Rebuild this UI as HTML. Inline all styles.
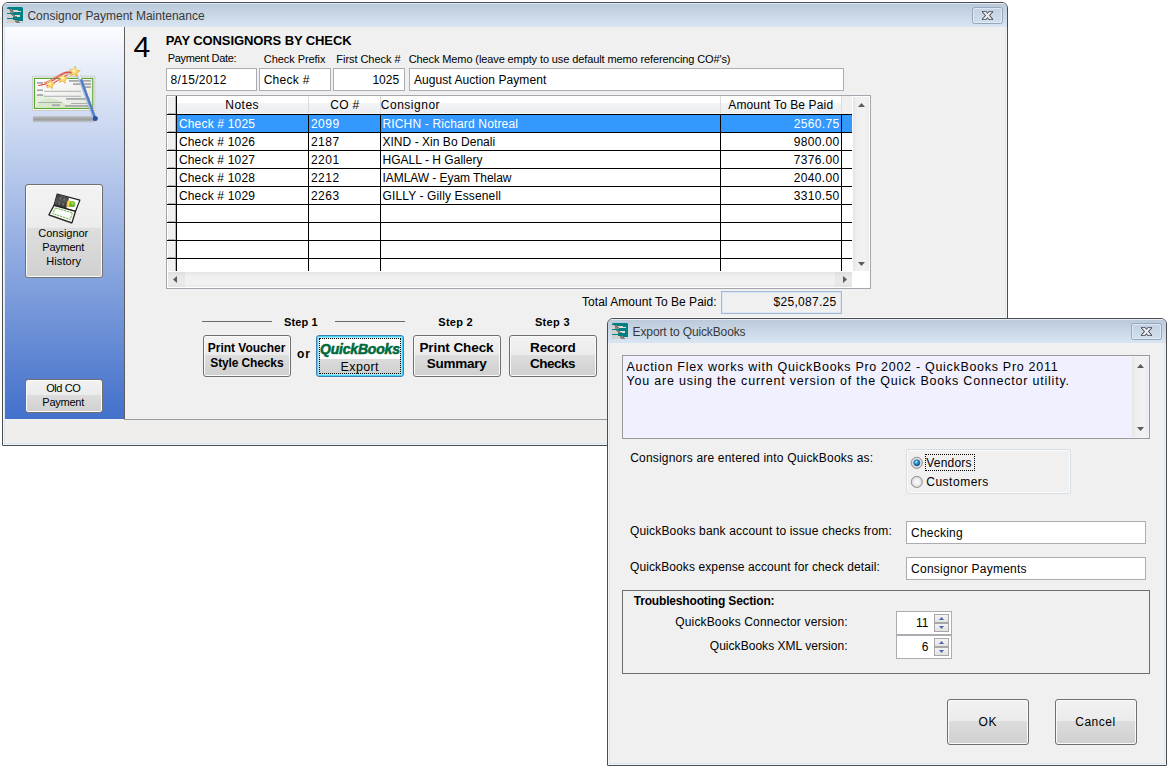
<!DOCTYPE html>
<html><head><meta charset="utf-8"><title>Consignor Payment Maintenance</title>
<style>
html,body{margin:0;padding:0;background:#fff;}
body{width:1176px;height:774px;position:relative;overflow:hidden;font-family:"Liberation Sans",sans-serif;}
body>div,.a{position:absolute;box-sizing:content-box;}
.t{position:absolute;white-space:pre;font-family:"Liberation Sans",sans-serif;}
.tb{border:1px solid #abadb3;background:#fff;}
.btn{border:1px solid #707070;border-radius:3px;background:linear-gradient(#f2f2f2 0,#ebebeb 47%,#dddddd 48%,#cfcfcf 100%);box-shadow:inset 0 0 0 1px #fafafa;}
.closeb{width:29px;height:15px;border:1px solid #97a6b9;border-radius:2.5px;background:linear-gradient(#c3d1e1,#d2dfed);box-shadow:inset 0 0 0 1px rgba(226,236,248,.85);}
.spb{border:1px solid #a8a8a8;background:linear-gradient(#f4f4f4,#e2e2e2);}
.radio{border-radius:50%;box-sizing:border-box!important;border:1px solid #8e8f8f;background:radial-gradient(circle at 50% 50%,#fdfdfd 0,#e9e9e9 45%,#cfcfcf 100%);}
.radio.on{background:radial-gradient(circle at 42% 40%,#d8f3fb 0,#3fb5e6 18%,#1b6fae 34%,#17406f 46%,#dfe3e6 52%,#cfcfcf 100%);}
</style></head>
<body>
<div style="left:2px;top:2px;width:1004px;height:442px;border:1px solid #4c4c4c;border-radius:6px 6px 1px 1px;background:#dbe6f3;box-shadow:inset 0 0 0 1px #f1f6fb;"></div>
<div style="left:3px;top:3px;width:1004px;height:24px;border-radius:5px 5px 0 0;background:linear-gradient(#e4ecf6 0,#e4ecf6 1px,#bbcadb 1px,#d9e5f2 24px);"></div>
<div style="left:5px;top:27px;width:1000px;height:416px;background:#f0f0f0;"></div>
<div style="left:5px;top:27px;width:119px;height:392px;background:linear-gradient(#fbfcfe,#4270cb);"></div>
<div style="left:124px;top:27px;width:1px;height:392px;background:#5e5e5e;"></div>
<div style="left:5px;top:419px;width:119px;height:1px;background:#f4f4f4;"></div>
<div style="left:124px;top:419px;width:881px;height:1px;background:#9c9c9c;"></div>
<div style="left:5px;top:420px;width:1000px;height:23px;background:#f0eded;"></div>
<svg class="a" style="left:7px;top:7px;clip-path:polygon(1px 0,15px 0,16px 1px,16px 15px,15px 16px,1px 16px,0 15px,0 1px)" width="16" height="16" viewBox="0 0 16 16" shape-rendering="crispEdges">
<rect x="0" y="0" width="16" height="16" rx="1.5" fill="#008080"/>
<rect x="0" y="2" width="2" height="4" fill="#d4d0cf"/><rect x="2" y="2" width="3" height="1" fill="#808080"/><rect x="3" y="3" width="3" height="1" fill="#808080"/><rect x="3" y="4" width="4" height="1" fill="#808080"/><rect x="3" y="5" width="4" height="1" fill="#8a8a8a"/><rect x="0" y="3" width="3" height="3" fill="#d4d0cf"/>
<rect x="6" y="3" width="5" height="1" fill="#dcd4d2"/><rect x="7" y="4" width="7" height="1" fill="#e6dcda"/>
<rect x="0" y="7" width="4" height="4" fill="#d4d0cf"/><rect x="4" y="7" width="2" height="1" fill="#808080"/><rect x="4" y="8" width="2" height="2" fill="#d4d0cf"/><rect x="5" y="8" width="3" height="1" fill="#808080"/><rect x="6" y="9" width="4" height="1" fill="#808080"/><rect x="8" y="8" width="5" height="1" fill="#e6dcda"/><rect x="10" y="9" width="3" height="1" fill="#e6dcda"/><rect x="4" y="10" width="2" height="1" fill="#d4d0cf"/>
<rect x="0" y="12" width="6" height="4" fill="#d4d0cf"/><rect x="6" y="13" width="2" height="3" fill="#d4d0cf"/><rect x="8" y="13" width="3" height="1" fill="#808080"/><rect x="8" y="14" width="4" height="1" fill="#808080"/><rect x="9" y="15" width="4" height="1" fill="#808080"/><rect x="8" y="15" width="1" height="1" fill="#d4d0cf"/><rect x="12" y="14" width="4" height="1" fill="#dcd4d2"/><rect x="13" y="15" width="3" height="1" fill="#dcd4d2"/>
</svg>
<div class="a closeb" style="left:972px;top:7px"><svg width="29" height="15" viewBox="0 0 29 15" style="position:absolute;left:0;top:0">
<g fill="#ebebeb" stroke="#3c4157" stroke-width="1.7" stroke-linejoin="round"><polygon points="9.7,3.8 12.7,3.8 19.3,11.2 16.3,11.2"/><polygon points="19.3,3.8 16.3,3.8 9.7,11.2 12.7,11.2"/></g>
<g fill="#ebebeb"><polygon points="9.7,3.8 12.7,3.8 19.3,11.2 16.3,11.2"/><polygon points="19.3,3.8 16.3,3.8 9.7,11.2 12.7,11.2"/></g>
</svg></div>
<svg class="a" style="left:25px;top:60px" width="80" height="68" viewBox="25 60 80 68">
<defs>
<linearGradient id="shg" x1="0" y1="0" x2="0" y2="1"><stop offset="0" stop-color="#b9b9b9"/><stop offset="0.55" stop-color="#9b9b9b"/><stop offset="1" stop-color="#c9cdd8" stop-opacity="0.6"/></linearGradient>
<linearGradient id="ckg" x1="0" y1="0" x2="1" y2="1"><stop offset="0" stop-color="#ffffff"/><stop offset="0.5" stop-color="#f2f2f2"/><stop offset="1" stop-color="#dfe9d6"/></linearGradient>
<radialGradient id="stg" cx="0.4" cy="0.4" r="0.7"><stop offset="0" stop-color="#fff6b8"/><stop offset="0.6" stop-color="#f8cf4e"/><stop offset="1" stop-color="#eaa633"/></radialGradient>
<linearGradient id="wdg" x1="0" y1="0" x2="1" y2="0"><stop offset="0" stop-color="#8fb0e6"/><stop offset="1" stop-color="#2f4f93"/></linearGradient>
</defs>
<rect x="33" y="116.3" width="62" height="6.5" rx="1" fill="url(#shg)"/>
<rect x="32.4" y="76.2" width="62.4" height="34.3" fill="#f4f4f4" stroke="#c9c9c9" stroke-width="0.9"/>
<rect x="34.4" y="78.4" width="58.4" height="30" fill="url(#ckg)" stroke="#4ea32a" stroke-width="1.1"/>
<path d="M35 108 C38 100 46 97 55 99 C62 101 66 105 70 108 Z" fill="#cfe6bf" opacity="0.8"/>
<path d="M35 95 C40 92 46 94 50 98 L35 106 Z" fill="#dcedd0" opacity="0.6"/>
<g fill="#a9a9a9">
<rect x="37" y="82" width="6" height="1.8"/><rect x="37" y="89.3" width="6" height="1.8"/><rect x="37" y="94.2" width="6" height="1.8"/>
<rect x="69" y="80" width="22" height="1.8"/><rect x="73" y="83.2" width="18" height="1.8"/><rect x="84" y="86.2" width="7" height="1.8"/>
<rect x="44" y="90.8" width="37" height="0.9"/><rect x="44" y="95.8" width="37" height="0.9"/>
<rect x="66" y="98" width="24" height="1.8"/><rect x="38" y="102" width="24" height="0.9"/><rect x="71" y="103" width="17" height="0.9"/>
<rect x="52" y="104.3" width="8" height="1.8"/><rect x="65" y="105" width="24" height="1.8"/>
</g>
<path d="M38 85.5 C48 85 56 78 62 74 C66 71.8 70 72.2 74 72.5" stroke="#d2362c" stroke-width="0.9" fill="none"/>
<path d="M44 82.5 C52 81 58 74 66 72 C69 71.4 72 72 75 73" stroke="#e0564a" stroke-width="0.8" fill="none"/>
<path d="M46 86 C54 84 60 79 68 74.5" stroke="#c8332a" stroke-width="0.8" fill="none"/>
<path d="M54 82 C60 79 64 75 71 73.5" stroke="#e87d6e" stroke-width="0.7" fill="none"/>
<path d="M41 84.8 C50 84.5 57 77.5 63 74.2 C66 72.6 69 72.6 72 73" stroke="#d9483c" stroke-width="0.8" fill="none"/>
<line x1="79.0" y1="75.8" x2="94.4" y2="117.8" stroke="#a9c0ea" stroke-width="3.8" stroke-linecap="round"/>
<line x1="79.8" y1="76" x2="95.0" y2="117.8" stroke="#5479c0" stroke-width="2.3" stroke-linecap="round"/>
<circle cx="95.3" cy="118.5" r="2.5" fill="#2b52a0"/>
<line x1="78.8" y1="73.8" x2="80.4" y2="78.2" stroke="#eef0f6" stroke-width="2.6" stroke-linecap="round"/>
<polygon points="75.32,65.96 76.34,69.89 80.31,70.78 76.89,72.96 77.27,77.01 74.13,74.43 70.40,76.04 71.89,72.26 69.20,69.21 73.25,69.46" fill="url(#stg)" stroke="#e2a53a" stroke-width="0.5"/><polygon points="63.92,73.58 64.72,77.14 68.25,78.06 65.11,79.92 65.32,83.56 62.59,81.15 59.19,82.48 60.64,79.13 58.32,76.31 61.95,76.66" fill="url(#stg)" stroke="#e2a53a" stroke-width="0.5"/><polygon points="50.98,79.65 51.83,82.91 55.13,83.65 52.28,85.47 52.60,88.83 49.99,86.68 46.90,88.02 48.13,84.88 45.90,82.35 49.26,82.55" fill="url(#stg)" stroke="#e2a53a" stroke-width="0.5"/>
</svg>
<div class="btn" style="left:25px;top:184px;width:76px;height:92px;background:linear-gradient(#f3f3f3 0,#ececec 46%,#dedede 47%,#d0d0d0 100%);"></div>
<svg class="a" style="left:44px;top:189px" width="40" height="40" viewBox="44 189 40 40">
<defs>
<linearGradient id="dkg" x1="0" y1="0" x2="0" y2="1"><stop offset="0" stop-color="#3a3a3a"/><stop offset="0.5" stop-color="#555"/><stop offset="1" stop-color="#2e2e2e"/></linearGradient>
<radialGradient id="grg" cx="0.55" cy="0.35" r="0.7"><stop offset="0" stop-color="#b5e04a"/><stop offset="1" stop-color="#2f9a22"/></radialGradient>
<radialGradient id="ylg" cx="0.5" cy="0.4" r="0.7"><stop offset="0" stop-color="#ffe95a"/><stop offset="1" stop-color="#f59a1a"/></radialGradient>
<clipPath id="rtc"><polygon points="68.6,197.3 79.4,200.3 75.2,210.8 65.6,208.2"/></clipPath>
</defs>
<polygon points="57.2,194 79.9,200.1 75.5,211.3 54.1,205.3" fill="#fdfdfd" stroke="#1c1c1c" stroke-width="1.2" stroke-linejoin="round"/>
<polygon points="57.3,194.2 69.2,197.4 66.2,208.6 54.4,205.3" fill="url(#dkg)"/>
<g fill="#7a7a7a" opacity="0.85"><rect x="59.6" y="197.3" width="1.6" height="2.2"/><rect x="63.5" y="198.3" width="1.6" height="2.2"/><rect x="58.5" y="202.2" width="1.6" height="2.4"/><rect x="62.4" y="203.2" width="1.6" height="2.4"/><rect x="61.5" y="195.8" width="1.2" height="1.4"/></g>
<g clip-path="url(#rtc)"><circle cx="69.0" cy="203.7" r="3.3" fill="url(#ylg)"/><circle cx="72.3" cy="204.0" r="3.0" fill="url(#grg)"/></g>
<polygon points="54.1,205.3 75.5,211.3 71.9,222.9 48.9,214.8" fill="#fbfbfb" stroke="#1c1c1c" stroke-width="1.3" stroke-linejoin="round"/>
<polygon points="55.4,208 72.4,212.8 70.2,219.4 52.6,213.6" fill="none" stroke="#5cb236" stroke-width="0.9" stroke-dasharray="2.3 0.7"/>
<line x1="49.5" y1="215.6" x2="71.6" y2="223.4" stroke="#555" stroke-width="0.8" opacity="0.6"/>
</svg>
<div class="btn" style="left:25px;top:379px;width:76px;height:32px;"></div>
<div class="tb" style="left:166px;top:68px;width:89px;height:21px;"></div>
<div class="tb" style="left:259px;top:68px;width:70px;height:21px;"></div>
<div class="tb" style="left:333px;top:68px;width:70px;height:21px;"></div>
<div class="tb" style="left:409px;top:68px;width:433px;height:21px;"></div>
<div style="left:166px;top:95px;width:703px;height:192px;border:1px solid #a4a7ae;background:#fff;"></div>
<div style="left:177px;top:96px;width:665px;height:18px;background:linear-gradient(#fff 0,#fff 7px,#f3f4f6 7px,#eceef1 17px,#fafafa 17px,#fafafa 18px);"></div>
<div style="left:842px;top:96px;width:10px;height:18px;background:#f0f0f0;"></div>
<div style="left:308px;top:96px;width:1px;height:18px;background:#dcdcdc;"></div>
<div style="left:380px;top:96px;width:1px;height:18px;background:#dcdcdc;"></div>
<div style="left:720px;top:96px;width:1px;height:18px;background:#dcdcdc;"></div>
<div style="left:841px;top:96px;width:1px;height:18px;background:#dcdcdc;"></div>
<div style="left:177px;top:115px;width:675px;height:17px;background:#3399ff;"></div>
<div style="left:167px;top:96px;width:9px;height:175px;background:#f0f0f0;"></div>
<div style="left:167px;top:96px;width:1px;height:175px;background:#fff;"></div>
<div style="left:175px;top:96px;width:1px;height:175px;background:#b4b4b4;"></div>
<div style="left:167px;top:115px;width:8px;height:1px;background:#fff;"></div>
<div style="left:168px;top:113px;width:8px;height:1px;background:#b4b4b4;"></div>
<div style="left:167px;top:133px;width:8px;height:1px;background:#fff;"></div>
<div style="left:168px;top:131px;width:8px;height:1px;background:#b4b4b4;"></div>
<div style="left:167px;top:151px;width:8px;height:1px;background:#fff;"></div>
<div style="left:168px;top:149px;width:8px;height:1px;background:#b4b4b4;"></div>
<div style="left:167px;top:169px;width:8px;height:1px;background:#fff;"></div>
<div style="left:168px;top:167px;width:8px;height:1px;background:#b4b4b4;"></div>
<div style="left:167px;top:187px;width:8px;height:1px;background:#fff;"></div>
<div style="left:168px;top:185px;width:8px;height:1px;background:#b4b4b4;"></div>
<div style="left:167px;top:205px;width:8px;height:1px;background:#fff;"></div>
<div style="left:168px;top:203px;width:8px;height:1px;background:#b4b4b4;"></div>
<div style="left:167px;top:223px;width:8px;height:1px;background:#fff;"></div>
<div style="left:168px;top:221px;width:8px;height:1px;background:#b4b4b4;"></div>
<div style="left:167px;top:241px;width:8px;height:1px;background:#fff;"></div>
<div style="left:168px;top:239px;width:8px;height:1px;background:#b4b4b4;"></div>
<div style="left:167px;top:259px;width:8px;height:1px;background:#fff;"></div>
<div style="left:168px;top:257px;width:8px;height:1px;background:#b4b4b4;"></div>
<div style="left:167px;top:96px;width:8px;height:1px;background:#fff;"></div>
<div style="left:176px;top:96px;width:1px;height:175px;background:#000;"></div>
<div style="left:308px;top:114px;width:1px;height:157px;background:#000;"></div>
<div style="left:380px;top:114px;width:1px;height:157px;background:#000;"></div>
<div style="left:720px;top:114px;width:1px;height:157px;background:#000;"></div>
<div style="left:841px;top:114px;width:1px;height:157px;background:#000;"></div>
<div style="left:167px;top:114px;width:685px;height:1px;background:#000;"></div>
<div style="left:167px;top:132px;width:685px;height:1px;background:#000;"></div>
<div style="left:167px;top:150px;width:685px;height:1px;background:#000;"></div>
<div style="left:167px;top:168px;width:685px;height:1px;background:#000;"></div>
<div style="left:167px;top:186px;width:685px;height:1px;background:#000;"></div>
<div style="left:167px;top:204px;width:685px;height:1px;background:#000;"></div>
<div style="left:167px;top:222px;width:685px;height:1px;background:#000;"></div>
<div style="left:167px;top:240px;width:685px;height:1px;background:#000;"></div>
<div style="left:167px;top:258px;width:685px;height:1px;background:#000;"></div>
<div style="left:852px;top:96px;width:18px;height:176px;background:#fff;"></div>
<div style="left:853px;top:97px;width:16px;height:174px;background:linear-gradient(to right,#e6e6e6,#efefef 4px,#f2f2f2 12px,#ebebeb);"></div>
<svg class="a" style="left:858px;top:103px" width="7" height="4" viewBox="0 0 7 4"><polygon points="0,4 3.5,0 7,4" fill="#5b5b5b"/></svg>
<svg class="a" style="left:858px;top:262px" width="7" height="4" viewBox="0 0 7 4"><polygon points="0,0 7,0 3.5,4" fill="#5b5b5b"/></svg>
<div style="left:167px;top:271px;width:685px;height:17px;background:#fff;"></div>
<div style="left:168px;top:272px;width:684px;height:15px;background:linear-gradient(#e6e6e6,#efefef 4px,#f2f2f2 11px,#ebebeb);"></div>
<div style="left:168px;top:272px;width:17px;height:15px;background:rgba(0,0,0,0.03);"></div>
<div style="left:835px;top:272px;width:17px;height:15px;background:rgba(0,0,0,0.03);"></div>
<svg class="a" style="left:173px;top:276px" width="4" height="7" viewBox="0 0 4 7"><polygon points="4,0 4,7 0,3.5" fill="#5b5b5b"/></svg>
<svg class="a" style="left:843px;top:276px" width="4" height="7" viewBox="0 0 4 7"><polygon points="0,0 0,7 4,3.5" fill="#5b5b5b"/></svg>
<div style="left:852px;top:271px;width:18px;height:17px;background:#fff;"></div>
<div style="left:721px;top:291px;width:119px;height:21px;border:1px solid #a3bbd9;background:#f0f0f0;box-shadow:inset 0 0 0 1px #dce6f2;"></div>
<div style="left:202px;top:321px;width:70px;height:1px;background:#6a6a6a;"></div>
<div style="left:335px;top:321px;width:70px;height:1px;background:#6a6a6a;"></div>
<div class="btn" style="left:203px;top:335px;width:86px;height:40px;"></div>
<div class="btn" style="left:316px;top:335px;width:86px;height:40px;border-color:#3c7fb1;box-shadow:inset 0 0 0 1px #46d4f8, inset 0 0 0 2px #a9e6f6;"></div>
<div style="left:319px;top:338px;width:80px;height:34px;border:1px dotted #000;"></div>
<div style="left:320px;top:339px;width:80px;height:20px;background:#fff;"></div>
<div class="btn" style="left:413px;top:335px;width:86px;height:40px;"></div>
<div class="btn" style="left:509px;top:335px;width:86px;height:40px;"></div>
<span class="t" id="t0" style="top:10px;font-size:12px;line-height:12px;color:#383838;letter-spacing:-0.012px;left:27.48px;">Consignor Payment Maintenance</span>
<span class="t" id="t1" style="top:32px;font-size:30px;line-height:30px;letter-spacing:1.453px;left:133.60px;">4</span>
<span class="t" id="t2" style="top:34px;font-size:13px;line-height:13px;font-weight:700;letter-spacing:-0.098px;left:165.72px;">PAY CONSIGNORS BY CHECK</span>
<span class="t" id="t3" style="top:53px;font-size:11px;line-height:11px;letter-spacing:-0.340px;left:167.84px;">Payment Date:</span>
<span class="t" id="t4" style="top:54px;font-size:11px;line-height:11px;letter-spacing:-0.052px;left:263.74px;">Check Prefix</span>
<span class="t" id="t5" style="top:54px;font-size:11px;line-height:11px;letter-spacing:-0.051px;left:336.34px;">First Check #</span>
<span class="t" id="t6" style="top:54px;font-size:11px;line-height:11px;letter-spacing:-0.111px;left:408.74px;">Check Memo (leave empty to use default memo referencing CO#'s)</span>
<span class="t" id="t7" style="top:74px;font-size:12px;line-height:12px;letter-spacing:0.301px;left:170.58px;">8/15/2012</span>
<span class="t" id="t8" style="top:74px;font-size:12px;line-height:12px;letter-spacing:0.277px;left:263.68px;">Check #</span>
<span class="t" id="t9" style="top:74px;font-size:12px;line-height:12px;right:776.92px;">1025</span>
<span class="t" id="t10" style="top:74px;font-size:12px;line-height:12px;letter-spacing:0.078px;left:413.88px;">August Auction Payment</span>
<span class="t" id="t11" style="top:99px;font-size:12px;line-height:12px;letter-spacing:0.484px;left:225.28px;">Notes</span>
<span class="t" id="t12" style="top:99px;font-size:12px;line-height:12px;letter-spacing:0.260px;left:330.28px;">CO #</span>
<span class="t" id="t13" style="top:99px;font-size:12px;line-height:12px;letter-spacing:0.512px;left:380.78px;">Consignor</span>
<span class="t" id="t14" style="top:99px;font-size:12px;line-height:12px;letter-spacing:0.143px;left:728.28px;">Amount To Be Paid</span>
<span class="t" id="t15" style="top:118px;font-size:12px;line-height:12px;color:#fff;letter-spacing:0.185px;left:178.88px;">Check # 1025</span>
<span class="t" id="t16" style="top:118px;font-size:12px;line-height:12px;color:#fff;letter-spacing:0.564px;left:310.88px;">2099</span>
<span class="t" id="t17" style="top:118px;font-size:12px;line-height:12px;color:#fff;letter-spacing:0.157px;left:382.48px;">RICHN - Richard Notreal</span>
<span class="t" id="t18" style="top:118px;font-size:12px;line-height:12px;color:#fff;letter-spacing:0.334px;left:793.78px;">2560.75</span>
<span class="t" id="t19" style="top:136px;font-size:12px;line-height:12px;letter-spacing:0.185px;left:178.88px;">Check # 1026</span>
<span class="t" id="t20" style="top:136px;font-size:12px;line-height:12px;letter-spacing:0.564px;left:310.88px;">2187</span>
<span class="t" id="t21" style="top:136px;font-size:12px;line-height:12px;letter-spacing:0.034px;left:382.48px;">XIND - Xin Bo Denali</span>
<span class="t" id="t22" style="top:136px;font-size:12px;line-height:12px;letter-spacing:0.334px;left:793.78px;">9800.00</span>
<span class="t" id="t23" style="top:154px;font-size:12px;line-height:12px;letter-spacing:0.185px;left:178.88px;">Check # 1027</span>
<span class="t" id="t24" style="top:154px;font-size:12px;line-height:12px;letter-spacing:0.564px;left:310.88px;">2201</span>
<span class="t" id="t25" style="top:154px;font-size:12px;line-height:12px;letter-spacing:0.031px;left:382.48px;">HGALL - H Gallery</span>
<span class="t" id="t26" style="top:154px;font-size:12px;line-height:12px;letter-spacing:0.334px;left:793.78px;">7376.00</span>
<span class="t" id="t27" style="top:172px;font-size:12px;line-height:12px;letter-spacing:0.185px;left:178.88px;">Check # 1028</span>
<span class="t" id="t28" style="top:172px;font-size:12px;line-height:12px;letter-spacing:0.564px;left:310.88px;">2212</span>
<span class="t" id="t29" style="top:172px;font-size:12px;line-height:12px;letter-spacing:-0.054px;left:382.48px;">IAMLAW - Eyam Thelaw</span>
<span class="t" id="t30" style="top:172px;font-size:12px;line-height:12px;letter-spacing:0.334px;left:793.78px;">2040.00</span>
<span class="t" id="t31" style="top:190px;font-size:12px;line-height:12px;letter-spacing:0.185px;left:178.88px;">Check # 1029</span>
<span class="t" id="t32" style="top:190px;font-size:12px;line-height:12px;letter-spacing:0.564px;left:310.88px;">2263</span>
<span class="t" id="t33" style="top:190px;font-size:12px;line-height:12px;letter-spacing:0.133px;left:382.48px;">GILLY - Gilly Essenell</span>
<span class="t" id="t34" style="top:190px;font-size:12px;line-height:12px;letter-spacing:0.334px;left:793.78px;">3310.50</span>
<span class="t" id="t35" style="top:296px;font-size:12px;line-height:12px;letter-spacing:0.027px;left:582.08px;">Total Amount To Be Paid:</span>
<span class="t" id="t36" style="top:296px;font-size:12px;line-height:12px;letter-spacing:0.304px;left:773.48px;">$25,087.25</span>
<span class="t" id="t37" style="top:317px;font-size:11px;line-height:11px;font-weight:700;letter-spacing:0.084px;left:284.09px;">Step 1</span>
<span class="t" id="t38" style="top:317px;font-size:11px;line-height:11px;font-weight:700;letter-spacing:0.234px;left:438.34px;">Step 2</span>
<span class="t" id="t39" style="top:317px;font-size:11px;line-height:11px;font-weight:700;letter-spacing:0.314px;left:534.94px;">Step 3</span>
<span class="t" id="t40" style="top:348px;font-size:12px;line-height:12px;font-weight:700;letter-spacing:0.946px;left:297.03px;">or</span>
<span class="t" id="t41" style="top:342px;font-size:12px;line-height:12px;font-weight:700;letter-spacing:-0.021px;left:207.78px;">Print Voucher</span>
<span class="t" id="t42" style="top:357px;font-size:12px;line-height:12px;font-weight:700;letter-spacing:-0.129px;left:210.28px;">Style Checks</span>
<span class="t" id="t43" style="top:342px;font-size:14px;line-height:14px;font-weight:700;color:#006a3c;letter-spacing:-0.199px;font-style:italic;-webkit-text-stroke:0.55px #006a3c;left:320.06px;">QuickBooks</span>
<span class="t" id="t44" style="top:361px;font-size:12.5px;line-height:12.5px;letter-spacing:0.382px;left:340.55px;">Export</span>
<span class="t" id="t45" style="top:341px;font-size:13.5px;line-height:13.5px;font-weight:700;letter-spacing:-0.077px;left:419.39px;">Print Check</span>
<span class="t" id="t46" style="top:357px;font-size:13.5px;line-height:13.5px;font-weight:700;letter-spacing:-0.262px;left:426.69px;">Summary</span>
<span class="t" id="t47" style="top:341px;font-size:13.5px;line-height:13.5px;font-weight:700;letter-spacing:-0.192px;left:530.09px;">Record</span>
<span class="t" id="t48" style="top:357px;font-size:13.5px;line-height:13.5px;font-weight:700;letter-spacing:-0.495px;left:530.09px;">Checks</span>
<span class="t" id="t49" style="top:228px;font-size:11px;line-height:11px;letter-spacing:-0.025px;left:38.34px;">Consignor</span>
<span class="t" id="t50" style="top:242px;font-size:11px;line-height:11px;letter-spacing:-0.247px;left:42.34px;">Payment</span>
<span class="t" id="t51" style="top:256px;font-size:11px;line-height:11px;letter-spacing:0.076px;left:46.34px;">History</span>
<span class="t" id="t52" style="top:383px;font-size:11px;line-height:11px;letter-spacing:-0.430px;left:46.24px;">Old CO</span>
<span class="t" id="t53" style="top:397px;font-size:11px;line-height:11px;letter-spacing:-0.247px;left:42.34px;">Payment</span>
<div style="left:612px;top:317px;width:395px;height:1px;background:#fafafa;"></div>
<div style="left:607px;top:318px;width:558px;height:446px;border:1px solid #4c4c4c;border-radius:6px 6px 1px 1px;background:#dbe6f3;box-shadow:inset 0 0 0 1px #f1f6fb;"></div>
<div style="left:608px;top:319px;width:558px;height:24px;border-radius:5px 5px 0 0;background:linear-gradient(#e4ecf6 0,#e4ecf6 1px,#bbcadb 1px,#d9e5f2 24px);"></div>
<div style="left:610px;top:343px;width:554px;height:420px;background:#f0f0f0;"></div>
<svg class="a" style="left:612px;top:323px;clip-path:polygon(1px 0,15px 0,16px 1px,16px 15px,15px 16px,1px 16px,0 15px,0 1px)" width="16" height="16" viewBox="0 0 16 16" shape-rendering="crispEdges">
<rect x="0" y="0" width="16" height="16" rx="1.5" fill="#008080"/>
<rect x="0" y="2" width="2" height="4" fill="#d4d0cf"/><rect x="2" y="2" width="3" height="1" fill="#808080"/><rect x="3" y="3" width="3" height="1" fill="#808080"/><rect x="3" y="4" width="4" height="1" fill="#808080"/><rect x="3" y="5" width="4" height="1" fill="#8a8a8a"/><rect x="0" y="3" width="3" height="3" fill="#d4d0cf"/>
<rect x="6" y="3" width="5" height="1" fill="#dcd4d2"/><rect x="7" y="4" width="7" height="1" fill="#e6dcda"/>
<rect x="0" y="7" width="4" height="4" fill="#d4d0cf"/><rect x="4" y="7" width="2" height="1" fill="#808080"/><rect x="4" y="8" width="2" height="2" fill="#d4d0cf"/><rect x="5" y="8" width="3" height="1" fill="#808080"/><rect x="6" y="9" width="4" height="1" fill="#808080"/><rect x="8" y="8" width="5" height="1" fill="#e6dcda"/><rect x="10" y="9" width="3" height="1" fill="#e6dcda"/><rect x="4" y="10" width="2" height="1" fill="#d4d0cf"/>
<rect x="0" y="12" width="6" height="4" fill="#d4d0cf"/><rect x="6" y="13" width="2" height="3" fill="#d4d0cf"/><rect x="8" y="13" width="3" height="1" fill="#808080"/><rect x="8" y="14" width="4" height="1" fill="#808080"/><rect x="9" y="15" width="4" height="1" fill="#808080"/><rect x="8" y="15" width="1" height="1" fill="#d4d0cf"/><rect x="12" y="14" width="4" height="1" fill="#dcd4d2"/><rect x="13" y="15" width="3" height="1" fill="#dcd4d2"/>
</svg>
<div class="a closeb" style="left:1131px;top:323px"><svg width="29" height="15" viewBox="0 0 29 15" style="position:absolute;left:0;top:0">
<g fill="#ebebeb" stroke="#3c4157" stroke-width="1.7" stroke-linejoin="round"><polygon points="9.7,3.8 12.7,3.8 19.3,11.2 16.3,11.2"/><polygon points="19.3,3.8 16.3,3.8 9.7,11.2 12.7,11.2"/></g>
<g fill="#ebebeb"><polygon points="9.7,3.8 12.7,3.8 19.3,11.2 16.3,11.2"/><polygon points="19.3,3.8 16.3,3.8 9.7,11.2 12.7,11.2"/></g>
</svg></div>
<div style="left:622px;top:355px;width:526px;height:82px;border:1px solid #9a9a9a;background:#f0f0ff;"></div>
<div style="left:1132px;top:357px;width:16px;height:80px;background:linear-gradient(to right,#e6e6e6,#efefef 4px,#f2f2f2 12px,#ebebeb);"></div>
<svg class="a" style="left:1137px;top:364px" width="7" height="4" viewBox="0 0 7 4"><polygon points="0,4 3.5,0 7,4" fill="#5b5b5b"/></svg>
<svg class="a" style="left:1137px;top:427px" width="7" height="4" viewBox="0 0 7 4"><polygon points="0,0 7,0 3.5,4" fill="#5b5b5b"/></svg>
<div style="left:906px;top:449px;width:163px;height:43px;border:1px solid #d5dfe5;border-radius:3px;box-shadow:inset 0 0 0 1px #fbfbfb;"></div>
<svg class="a" style="left:910px;top:456px" width="14" height="14" viewBox="0 0 14 14"><defs><radialGradient id="rb" cx="0.5" cy="0.5" r="0.5"><stop offset="0" stop-color="#fefefe"/><stop offset="0.6" stop-color="#ececec"/><stop offset="1" stop-color="#c9c9c9"/></radialGradient><radialGradient id="rd" cx="0.4" cy="0.35" r="0.7"><stop offset="0" stop-color="#c9f0fb"/><stop offset="0.35" stop-color="#35aee2"/><stop offset="0.8" stop-color="#135c9d"/><stop offset="1" stop-color="#0f3e70"/></radialGradient></defs><circle cx="6.8" cy="6.8" r="5.6" fill="url(#rb)" stroke="#8a8c8e" stroke-width="0.9"/><circle cx="6.8" cy="6.8" r="3.1" fill="url(#rd)" stroke="#1c4a78" stroke-width="0.6"/></svg>
<svg class="a" style="left:910px;top:475px" width="14" height="14" viewBox="0 0 14 14"><circle cx="6.8" cy="6.9" r="5.6" fill="url(#rb)" stroke="#8a8c8e" stroke-width="0.9"/></svg>
<div style="left:925px;top:454px;width:48px;height:15px;border:1px dotted #000;"></div>
<div class="tb" style="left:906px;top:521px;width:238px;height:21px;"></div>
<div class="tb" style="left:906px;top:557px;width:238px;height:21px;"></div>
<div style="left:622px;top:590px;width:526px;height:82px;border:1px solid #6e6e6e;"></div>
<div class="tb" style="left:896px;top:611px;width:54px;height:22px;"></div>
<div class="spb" style="left:934px;top:614px;width:13px;height:7px;"></div>
<div class="spb" style="left:934px;top:623px;width:13px;height:7px;"></div>
<svg class="a" style="left:939px;top:617px" width="5" height="3" viewBox="0 0 7 4"><polygon points="0,4 3.5,0 7,4" fill="#4c64b4"/></svg>
<svg class="a" style="left:939px;top:626px" width="5" height="3" viewBox="0 0 7 4"><polygon points="0,0 7,0 3.5,4" fill="#4c64b4"/></svg>
<div class="tb" style="left:896px;top:635px;width:54px;height:22px;"></div>
<div class="spb" style="left:934px;top:638px;width:13px;height:7px;"></div>
<div class="spb" style="left:934px;top:647px;width:13px;height:7px;"></div>
<svg class="a" style="left:939px;top:641px" width="5" height="3" viewBox="0 0 7 4"><polygon points="0,4 3.5,0 7,4" fill="#4c64b4"/></svg>
<svg class="a" style="left:939px;top:650px" width="5" height="3" viewBox="0 0 7 4"><polygon points="0,0 7,0 3.5,4" fill="#4c64b4"/></svg>
<div class="btn" style="left:947px;top:699px;width:80px;height:44px;"></div>
<div class="btn" style="left:1055px;top:699px;width:80px;height:44px;"></div>
<span class="t" id="t54" style="top:326px;font-size:12px;line-height:12px;color:#383838;letter-spacing:-0.126px;left:632.58px;">Export to QuickBooks</span>
<span class="t" id="t55" style="top:361px;font-size:12.5px;line-height:12.5px;letter-spacing:0.703px;left:626.55px;">Auction Flex works with QuickBooks Pro 2002 - QuickBooks Pro 2011</span>
<span class="t" id="t56" style="top:375px;font-size:12.5px;line-height:12.5px;letter-spacing:0.792px;left:626.55px;">You are using the current version of the Quick Books Connector utility.</span>
<span class="t" id="t57" style="top:452px;font-size:12px;line-height:12px;letter-spacing:0.198px;left:630.18px;">Consignors are entered into QuickBooks as:</span>
<span class="t" id="t58" style="top:457px;font-size:12px;line-height:12px;letter-spacing:0.208px;left:926.28px;">Vendors</span>
<span class="t" id="t59" style="top:476px;font-size:12px;line-height:12px;letter-spacing:0.504px;left:926.28px;">Customers</span>
<span class="t" id="t60" style="top:525px;font-size:12px;line-height:12px;letter-spacing:0.160px;left:629.98px;">QuickBooks bank account to issue checks from:</span>
<span class="t" id="t61" style="top:527px;font-size:12px;line-height:12px;letter-spacing:0.209px;left:911.08px;">Checking</span>
<span class="t" id="t62" style="top:561px;font-size:12px;line-height:12px;letter-spacing:0.105px;left:629.98px;">QuickBooks expense account for check detail:</span>
<span class="t" id="t63" style="top:563px;font-size:12px;line-height:12px;letter-spacing:0.241px;left:911.08px;">Consignor Payments</span>
<span class="t" id="t64" style="top:595px;font-size:12px;line-height:12px;font-weight:700;letter-spacing:-0.164px;left:633.68px;">Troubleshooting Section:</span>
<span class="t" id="t65" style="top:616px;font-size:12px;line-height:12px;letter-spacing:0.151px;left:675.28px;">QuickBooks Connector version:</span>
<span class="t" id="t66" style="top:640px;font-size:12px;line-height:12px;letter-spacing:0.038px;left:709.78px;">QuickBooks XML version:</span>
<span class="t" id="t67" style="top:617px;font-size:12px;line-height:12px;right:247.67px;">11</span>
<span class="t" id="t68" style="top:641px;font-size:12px;line-height:12px;right:247.67px;">6</span>
<span class="t" id="t69" style="top:716px;font-size:12px;line-height:12px;letter-spacing:0.652px;left:978.48px;">OK</span>
<span class="t" id="t70" style="top:716px;font-size:12px;line-height:12px;letter-spacing:0.487px;left:1075.28px;">Cancel</span>
</body></html>
